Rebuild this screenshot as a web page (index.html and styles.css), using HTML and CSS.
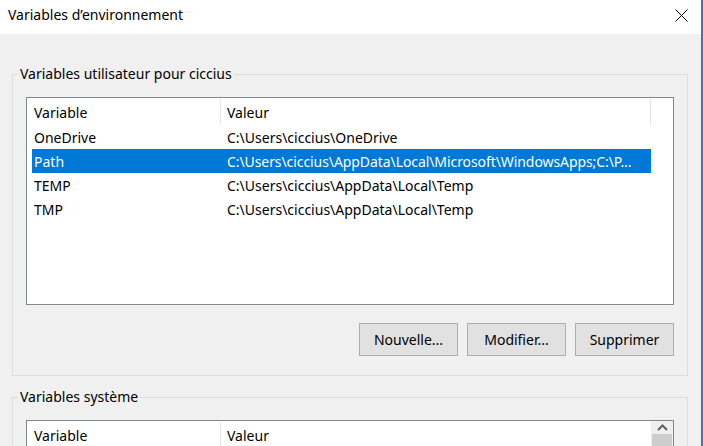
FILE: index.html
```html
<!DOCTYPE html>
<html lang="fr">
<head>
<meta charset="utf-8">
<title>Variables d’environnement</title>
<link rel="stylesheet" href="styles.css">
</head>
<body>
<div class="window">
  <div class="titlebar">
    <span class="title">Variables d’environnement</span>
    <svg class="close" width="13" height="13" viewBox="0 0 13 13" aria-hidden="true">
      <path d="M0.5 0.5 L12.5 12.5 M12.5 0.5 L0.5 12.5" stroke="#000" stroke-width="1" fill="none"/>
    </svg>
  </div>
  <div class="content">
    <fieldset class="group group-user">
      <legend>Variables utilisateur pour ciccius</legend>
      <div class="list list-user">
        <div class="list-main">
          <div class="list-header">
            <div class="hcell hcell-name">Variable</div>
            <div class="hcell hcell-value">Valeur</div>
          </div>
          <div class="row"><div class="c1">OneDrive</div><div class="c2">C:\Users\ciccius\OneDrive</div></div>
          <div class="row selected"><div class="c1">Path</div><div class="c2 tight">C:\Users\ciccius\AppData\Local\Microsoft\WindowsApps;C:\P...</div></div>
          <div class="row"><div class="c1">TEMP</div><div class="c2">C:\Users\ciccius\AppData\Local\Temp</div></div>
          <div class="row"><div class="c1">TMP</div><div class="c2">C:\Users\ciccius\AppData\Local\Temp</div></div>
        </div>
      </div>
      <div class="buttons">
        <button class="btn">Nouvelle...</button>
        <button class="btn">Modifier...</button>
        <button class="btn">Supprimer</button>
      </div>
    </fieldset>
    <fieldset class="group group-system">
      <legend>Variables système</legend>
      <div class="list list-system">
        <div class="list-main">
          <div class="list-header">
            <div class="hcell hcell-name">Variable</div>
            <div class="hcell hcell-value2">Valeur</div>
          </div>
        </div>
        <div class="scrollbar">
          <div class="sb-arrow">
            <svg width="11" height="7" viewBox="0 0 11 7" aria-hidden="true">
              <path d="M1 6 L5.5 1.5 L10 6" stroke="#606060" stroke-width="2" fill="none"/>
            </svg>
          </div>
          <div class="sb-thumb"></div>
        </div>
      </div>
    </fieldset>
  </div>
</div>
</body>
</html>
```

FILE: styles.css
```css
* { box-sizing: border-box; }

html, body {
  margin: 0;
  padding: 0;
  background: #f0f0f0;
}

body {
  font-family: "Noto Sans", "Open Sans", sans-serif;
  font-size: 14px;
  color: #000;
}

.window {
  width: 703px;
  height: 446px;
  overflow: hidden;
  background: #f0f0f0;
  border-right: 2px solid #1883d7;
}

.titlebar {
  height: 34px;
  background: #fff;
  display: flex;
  justify-content: space-between;
  align-items: flex-start;
  padding: 5px 13px 0 8px;
}

.title {
  line-height: 20px;
  font-size: 14px;
}

.close {
  display: block;
  margin-top: 4px;
}

.content {
  padding: 0 13px 0 12px;
}

.group {
  margin: 0;
  border: 1px solid #dcdcdc;
  padding: 13px 13px 19px 13px;
  min-width: 0;
}

.group legend {
  padding: 0 2px;
  margin-left: -8px;
  line-height: 20px;
  font-size: 14px;
}

.group-user { margin-top: 30px; }
.group-system { margin-top: 11px; }

.list {
  background: #fff;
  border: 1px solid #828790;
  display: flex;
}

.list-user { height: 208px; }
.list-system { height: 40px; }

.list-main {
  flex: 1;
  min-width: 0;
}

.list-header {
  display: flex;
  height: 27px;
  padding-top: 1px;
}

.hcell {
  height: 26px;
  line-height: 25px;
  padding-top: 1px;
  border-right: 1px solid #e5e5e5;
  white-space: nowrap;
}

.hcell-name {
  width: 194px;
  padding-left: 7px;
}

.hcell-value {
  width: 430px;
  padding-left: 6px;
}

.hcell-value2 {
  flex: 1;
  padding-left: 6px;
  border-right: none;
}

.row {
  display: flex;
  height: 24px;
  line-height: 23px;
  padding-top: 1px;
  margin-left: 5px;
  width: 619px;
  white-space: nowrap;
}

.row .c1 {
  width: 195px;
  padding-left: 2px;
  flex: none;
}

.row .c2 {
  flex: 1;
  overflow: hidden;
}

.row .c2.tight {
  letter-spacing: -0.08px;
}

.row.selected {
  background: #0078d7;
  color: #fff;
}

.buttons {
  display: flex;
  justify-content: flex-end;
  gap: 9px;
  margin-top: 18px;
}

.btn {
  width: 99px;
  height: 33px;
  border: 1px solid #adadad;
  background: #e1e1e1;
  font-family: inherit;
  font-size: 14px;
  color: #000;
  padding: 0;
  margin: 0;
}

.scrollbar {
  width: 22px;
  flex: none;
  background: #f0f0f0;
  display: flex;
  flex-direction: column;
  align-items: center;
}

.sb-arrow {
  height: 22px;
  width: 100%;
  display: flex;
  align-items: center;
  justify-content: center;
}

.sb-thumb {
  width: 20px;
  height: 40px;
  background: #cdcdcd;
}
```
